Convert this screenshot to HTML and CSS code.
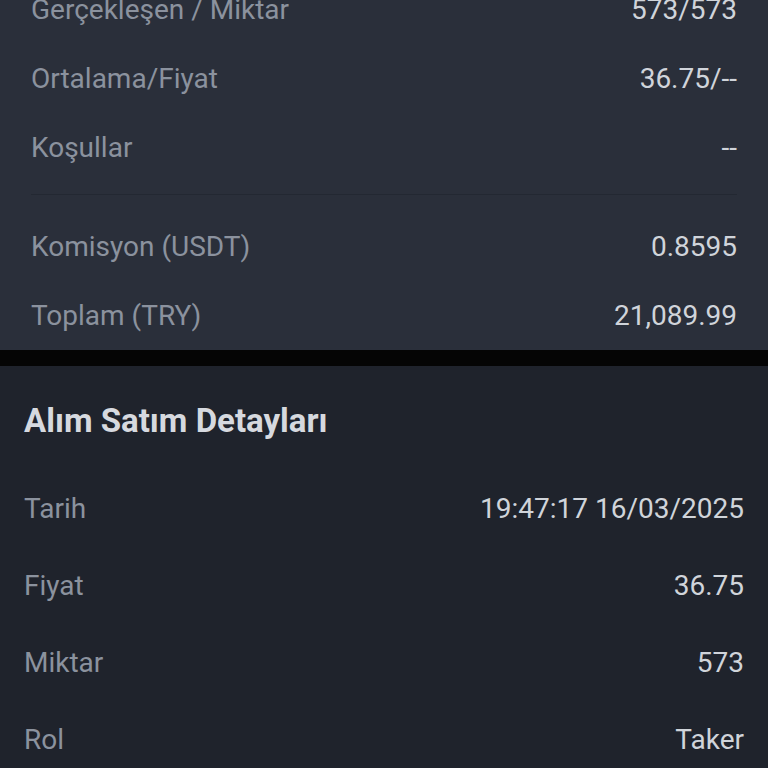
FILE: index.html
```html
<!DOCTYPE html>
<html lang="tr">
<head>
  <meta charset="UTF-8">
  <title>Emir Detayları</title>
  <link rel="stylesheet" href="styles.css">
</head>
<body>
<div class="page">
  <section class="order-card">
    <div class="order-list">
      <div class="row">
        <span class="label">Gerçekleşen / Miktar</span>
        <span class="value">573/573</span>
      </div>
      <div class="row">
        <span class="label">Ortalama/Fiyat</span>
        <span class="value">36.75/--</span>
      </div>
      <div class="row">
        <span class="label">Koşullar</span>
        <span class="value">--</span>
      </div>
      <div class="divider"></div>
      <div class="row">
        <span class="label">Komisyon (USDT)</span>
        <span class="value">0.8595</span>
      </div>
      <div class="row">
        <span class="label">Toplam (TRY)</span>
        <span class="value">21,089.99</span>
      </div>
    </div>
  </section>

  <section class="trade-details">
    <h2 class="title">Alım Satım Detayları</h2>
    <div class="row">
      <span class="label">Tarih</span>
      <span class="value">19:47:17 16/03/2025</span>
    </div>
    <div class="row">
      <span class="label">Fiyat</span>
      <span class="value">36.75</span>
    </div>
    <div class="row">
      <span class="label">Miktar</span>
      <span class="value">573</span>
    </div>
    <div class="row">
      <span class="label">Rol</span>
      <span class="value">Taker</span>
    </div>
  </section>
</div>
</body>
</html>
```

FILE: styles.css
```css
* {
  margin: 0;
  padding: 0;
  box-sizing: border-box;
}

html, body {
  height: 100%;
}

body {
  background-color: #1f232c;
  font-family: Roboto, "Noto Sans", sans-serif;
  overflow: hidden;
}

.page {
  display: flex;
  flex-direction: column;
  gap: 16px;
  background-color: #050505;
}

.order-card {
  background-color: #2a2f3a;
  padding: 0 31px;
  height: 350px;
  overflow: hidden;
}

/* list is scrolled up, first row is half hidden */
.order-list {
  margin-top: -25px;
  display: flex;
  flex-direction: column;
}

.row {
  display: flex;
  justify-content: space-between;
  align-items: center;
  font-size: 28px;
}

.order-card .row {
  height: 69px;
}

.label {
  color: #8b929e;
}

.value {
  color: #d0d4da;
}

.divider {
  height: 1px;
  background-color: #232832;
  margin: 12px 0 17px;
}

.trade-details {
  background-color: #1f232c;
  padding: 0 24px;
  min-height: 420px;
}

.title {
  font-size: 33px;
  font-weight: 700;
  color: #d6d9df;
  line-height: 40px;
  padding: 35px 0 29px;
}

.trade-details .row {
  height: 77px;
}
```
